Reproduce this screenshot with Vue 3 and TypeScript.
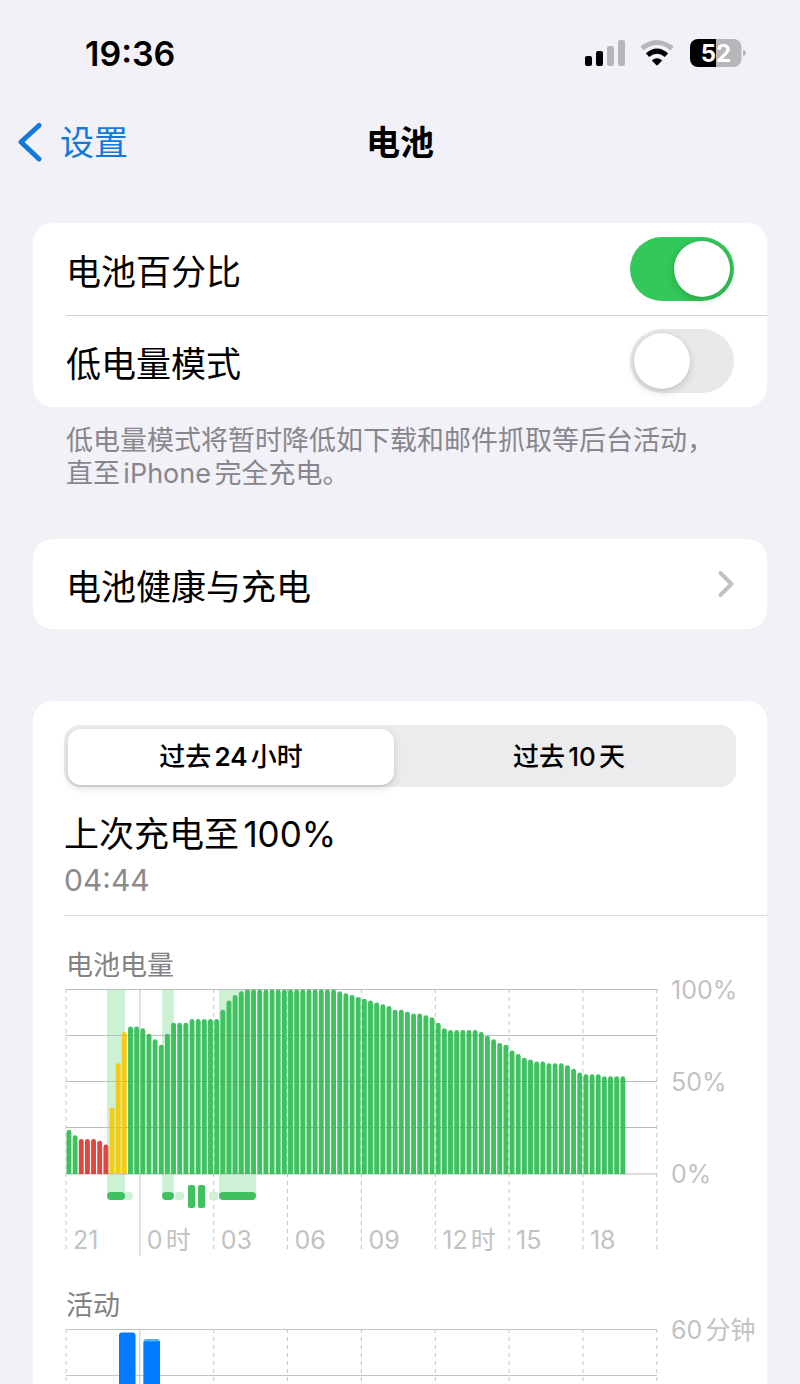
<script setup lang="ts">
import { ref } from 'vue'

type Tone = 'green' | 'red' | 'yellow'

const showPercentage = ref(true)
const lowPower = ref(false)
const range = ref<'day' | 'tenDays'>('day')

const columnWidth = 73.85
const barPitch = columnWidth / 12
const chartTop = 4.5
const chartBase = 189

const levels: number[] = [
  24, 21, 19, 19, 19, 18, 16, 36, 60, 77, 80, 80,
  79, 76, 73, 70, 76, 82, 82, 82, 84, 84, 84, 84,
  84, 89, 94, 97, 99, 100, 100, 100, 100, 100, 100, 100,
  100, 100, 100, 100, 100, 100, 100, 100, 99, 98, 97, 96,
  95, 94, 93, 92, 91, 89, 89, 88, 87, 87, 86, 85,
  82, 79, 78, 78, 78, 78, 78, 77, 75, 73, 71, 70,
  67, 65, 63, 62, 61, 61, 60, 60, 60, 59, 57, 55,
  54, 54, 54, 53, 53, 53, 53,
]

function tone(i: number): Tone {
  if (i >= 2 && i <= 6) return 'red'
  if (i >= 7 && i <= 9) return 'yellow'
  return 'green'
}

function barPath(i: number, level: number): string {
  const x = 1.5 + i * barPitch
  const w = 4.9
  const r = w / 2
  const top = chartBase - ((chartBase - chartTop) * level) / 100
  return `M${x} ${chartBase}V${top + r}a${r} ${r} 0 0 1 ${w} 0V${chartBase}Z`
}

const bars = levels.map((level, i) => ({ tone: tone(i), d: barPath(i, level) }))
const columns = Array.from({ length: 9 }, (_, i) => ({ x: 1 + i * columnWidth, solid: i === 1 }))
const rows = [4.5, 50.5, 96.5, 142.5, 189]
const charging = [
  { x: 42, w: 18 },
  { x: 97, w: 12 },
  { x: 154, w: 37 },
]
const hours = ['21', '0时', '03', '06', '09', '12时', '15', '18']
const percents = [
  { label: '100%', y: 14 },
  { label: '50%', y: 106 },
  { label: '0%', y: 198 },
]
</script>

<template>
  <div class="page">
    <div class="status">
      <span class="clock">19:36</span>
      <svg class="status-icons" viewBox="0 0 164 32" role="img" aria-label="信号、无线局域网、电池 52%">
        <rect x="1" y="19" width="7" height="10" rx="2" />
        <rect x="12" y="14" width="7" height="15" rx="2" />
        <rect class="dim" x="23" y="9" width="7" height="20" rx="2" />
        <rect class="dim" x="34" y="3" width="7" height="26" rx="2" />
        <path class="arc dim-line" d="M58 11.5Q73 -.5 88 11.5" />
        <path class="arc" d="M63.500 18.200Q73 10 82.500 18.200" />
        <path d="M67.800 23.600Q73 19 78.200 23.600L73.800 28Q73 28.800 72.200 28Z" />
        <path d="M132 2H114a8 8 0 0 0-8 8V22a8 8 0 0 0 8 8H132Z" />
        <path class="dim" d="M132 2H149.500a8 8 0 0 1 8 8V22a8 8 0 0 1-8 8H132Z" />
        <path class="dim" d="M159 12.500q3 1.200 3 3.500t-3 3.500Z" />
        <text class="charge" x="132" y="24.500" text-anchor="middle">52</text>
      </svg>
    </div>

    <header class="nav">
      <a class="back" href="#settings">
        <svg viewBox="0 0 24 40" aria-hidden="true"><path d="M21 3.500L3 20L21 37" /></svg>
        <span>设置</span>
      </a>
      <h1>电池</h1>
    </header>

    <main>
      <section class="card">
        <label class="row">
          <span>电池百分比</span>
          <input v-model="showPercentage" class="switch" type="checkbox" role="switch" />
        </label>
        <label class="row lined">
          <span>低电量模式</span>
          <input v-model="lowPower" class="switch" type="checkbox" role="switch" />
        </label>
      </section>
      <p class="note">低电量模式将暂时降低如下载和邮件抓取等后台活动，直至iPhone完全充电。</p>

      <section class="card">
        <a class="row health" href="#health">
          <span>电池健康与充电</span>
          <svg viewBox="0 0 16 28" aria-hidden="true"><path d="M2.500 3L13.500 14L2.500 25" /></svg>
        </a>
      </section>

      <section class="card usage">
        <div class="segments">
          <button type="button" :class="{ on: range === 'day' }" :aria-pressed="range === 'day'" @click="range = 'day'">过去<b>24</b>小时</button>
          <button type="button" :class="{ on: range === 'tenDays' }" :aria-pressed="range === 'tenDays'" @click="range = 'tenDays'">过去<b>10</b>天</button>
        </div>
        <div class="last">
          <h2>上次充电至100%</h2>
          <time>04:44</time>
        </div>

        <h3>电池电量</h3>
        <svg class="chart" viewBox="0 0 702 275" role="img" aria-label="电池电量">
          <rect v-for="c in charging" :key="c.x" class="band" :x="c.x" y="4" :width="c.w" height="207" />
          <line v-for="y in rows" :key="y" class="grid" x1="1" x2="592" :y1="y" :y2="y" />
          <line v-for="c in columns" :key="c.x" :class="['grid', { dashed: !c.solid }]" :x1="c.x" :x2="c.x" y1="4" :y2="c.solid ? 271 : 267" />
          <path v-for="(b, i) in bars" :key="i" :class="b.tone" :d="b.d" />
          <g class="overlay">
            <line v-for="y in rows" :key="y" class="grid" x1="1" x2="592" :y1="y" :y2="y" />
          </g>
          <rect class="band" x="54" y="207" width="14" height="8" rx="4" />
          <rect class="band" x="110" y="207" width="9" height="8" rx="2" />
          <rect class="band" x="144" y="207" width="9" height="8" rx="2" />
          <rect v-for="c in charging" :key="c.x" class="green" :x="c.x" y="207" :width="c.w" height="8" rx="4" />
          <rect class="green" x="123" y="200" width="7" height="23" rx="2" />
          <rect class="green" x="133" y="200" width="7" height="23" rx="2" />
          <text v-for="(h, i) in hours" :key="h" :x="8 + i * columnWidth" y="264">{{ h }}</text>
          <text v-for="p in percents" :key="p.label" x="606" :y="p.y">{{ p.label }}</text>
        </svg>

        <h3 class="activity">活动</h3>
        <svg class="chart" viewBox="0 0 702 275" role="img" aria-label="活动">
          <line v-for="y in rows" :key="y" class="grid" x1="1" x2="592" :y1="y" :y2="y" />
          <line v-for="c in columns" :key="c.x" :class="['grid', { dashed: !c.solid }]" :x1="c.x" :x2="c.x" y1="4" :y2="c.solid ? 271 : 267" />
          <path class="blue" d="M54 189V10.500a3 3 0 0 1 3-3H67.500a3 3 0 0 1 3 3V189Z" />
          <path class="sky" d="M78.500 189V17a3 3 0 0 1 3-3H92a3 3 0 0 1 3 3V189Z" />
          <path class="blue" d="M78.500 189V16.500H95V189Z" />
          <text x="606" y="14">60分钟</text>
        </svg>
      </section>
    </main>
  </div>
</template>

<style>
body {
  margin: 0;
  background: #f2f1f8;
}
</style>

<style scoped>
.page {
  display: flex;
  flex-direction: column;
  height: 100vh;
  overflow: hidden;
  background: #f2f1f8;
  color: #000;
  font-family: Inter, "Noto Sans CJK SC", sans-serif;
  text-autospace: normal;
}
.status {
  display: flex;
  flex: none;
  align-items: center;
  justify-content: space-between;
  height: 106px;
  padding: 0 52px 0 85px;
  box-sizing: border-box;
}
.clock {
  font-size: 34px;
  font-weight: 600;
}
.status-icons {
  width: 164px;
  height: 32px;
}
.dim {
  fill: #b7b6bb;
}
.arc {
  fill: none;
  stroke: #000;
  stroke-width: 5;
}
.dim-line {
  stroke: #b7b6bb;
}
.charge {
  fill: #fff;
  font-size: 24px;
  font-weight: 700;
}
.nav {
  display: grid;
  grid-template-columns: 1fr auto 1fr;
  flex: none;
  align-items: center;
  height: 72px;
  padding: 0 18px;
  margin-bottom: 45px;
}
.back {
  display: flex;
  align-items: center;
  gap: 18px;
  color: #1179dc;
  font-size: 34px;
  line-height: 48px;
  text-decoration: none;
}
.back span,
h1 {
  padding-top: 2px;
}
.back svg {
  width: 24px;
  height: 40px;
}
.back path {
  fill: none;
  stroke: #1179dc;
  stroke-width: 5;
  stroke-linecap: round;
  stroke-linejoin: round;
}
h1,
h2,
h3,
p {
  margin: 0;
}
h1 {
  font-size: 34px;
  line-height: 48px;
  font-weight: 700;
}
main {
  display: flex;
  flex: 1;
  flex-direction: column;
  min-height: 0;
  padding: 0 33px;
}
.card {
  flex: none;
  border-radius: 20px;
  background: #fff;
}
.row {
  position: relative;
  display: flex;
  align-items: center;
  justify-content: space-between;
  height: 92px;
  padding: 0 33px;
  color: #000;
  font-size: 35px;
  text-decoration: none;
}
.lined::before {
  position: absolute;
  top: 0;
  right: 0;
  left: 33px;
  height: 1px;
  background: #d4d4d8;
  content: "";
}
.switch {
  width: 104px;
  height: 64px;
  margin: 0;
  padding: 4px;
  box-sizing: border-box;
  border-radius: 32px;
  background: #e9e9eb;
  appearance: none;
}
.switch::before {
  display: block;
  width: 56px;
  height: 56px;
  border-radius: 50%;
  background: #fff;
  box-shadow: 0 3px 10px rgba(0, 0, 0, 0.16), 0 0 2px rgba(0, 0, 0, 0.1);
  content: "";
}
.switch:checked {
  background: #34c759;
}
.switch:checked::before {
  margin-left: 40px;
}
.note {
  padding: 17px 33px 0;
  margin-bottom: 49px;
  color: #87868c;
  font-size: 27px;
  line-height: 33px;
}
.health {
  height: 90px;
}
.health svg {
  width: 16px;
  height: 28px;
}
.health path {
  fill: none;
  stroke: #c2c2c5;
  stroke-width: 4;
  stroke-linecap: round;
  stroke-linejoin: round;
}
.usage {
  flex: 1;
  min-height: 0;
  margin-top: 72px;
  border-radius: 20px 20px 0 0;
  overflow: hidden;
}
.segments {
  display: grid;
  grid-template-columns: 1fr 1fr;
  gap: 12px;
  height: 62px;
  margin: 24px 31px 0;
  padding: 4px;
  box-sizing: border-box;
  border-radius: 16px;
  background: #ececee;
}
.segments button {
  padding: 0;
  border: 0;
  border-radius: 13px;
  background: none;
  color: #000;
  font: 500 26px/56px Inter, "Noto Sans CJK SC", sans-serif;
  text-autospace: normal;
}
.segments b {
  font-weight: 500;
}
.segments .on {
  background: #fff;
  box-shadow: 0 3px 8px rgba(0, 0, 0, 0.14), 0 2px 2px rgba(0, 0, 0, 0.06);
}
.segments .on b {
  font-weight: 600;
}
.last {
  height: 129px;
  margin-left: 31px;
  padding: 22px 0 0;
  box-sizing: border-box;
  border-bottom: 1px solid #dcdcdf;
}
h2 {
  font-size: 35px;
  font-weight: 400;
  line-height: 50px;
}
time {
  display: block;
  color: #8a8a8d;
  font-size: 30px;
  line-height: 42px;
}
h3 {
  padding-top: 31px;
  margin-left: 33px;
  color: #828284;
  font-size: 27px;
  font-weight: 400;
  line-height: 38px;
}
.activity {
  padding-top: 27px;
}
.chart {
  display: block;
  width: calc(100% - 32px);
  margin-left: 32px;
  overflow: visible;
}
.chart text {
  fill: #c2c2c4;
  font-size: 25px;
}
.grid {
  stroke: #c4c4c6;
  stroke-width: 1;
}
.dashed {
  stroke-dasharray: 4 4;
}
.overlay {
  opacity: 0.08;
}
.overlay .grid {
  stroke: #4a6b50;
}
.green {
  fill: #3fc160;
}
.red {
  fill: #dd4840;
}
.yellow {
  fill: #f4cc18;
}
.band {
  fill: #cdf1d5;
}
.blue {
  fill: #007aff;
}
.sky {
  fill: #4cb4f0;
}
</style>
